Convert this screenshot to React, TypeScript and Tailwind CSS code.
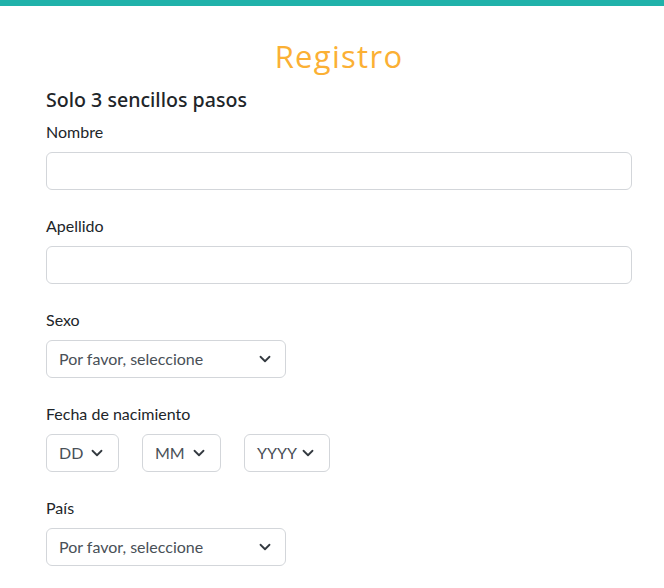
function Chevron() {
  return (
    <svg width="12" height="8" viewBox="0 0 12 8" className="shrink-0" aria-hidden>
      <path d="M1.5 1.75 6 6.25l4.5-4.5" fill="none" stroke="#343a40" strokeWidth="1.8" strokeLinecap="round" strokeLinejoin="round" />
    </svg>
  );
}

function Label({ children }: { children: React.ReactNode }) {
  return <div className="h-6 leading-6 mb-2 text-[16px] text-[#212529]">{children}</div>;
}

function TextField({ label }: { label: string }) {
  return (
    <div className="mb-6">
      <Label>{label}</Label>
      <div className="h-[38px] w-full rounded-md border border-[#d3d6da] bg-white" />
    </div>
  );
}

function Select({ text, width, pad = "pr-[15px]" }: { text: string; width: string; pad?: string }) {
  return (
    <div className={`${width} ${pad} h-[38px] rounded-md border border-[#d3d6da] bg-white pl-3 flex items-center justify-between text-[16px] text-[#495057]`}>
      <span>{text}</span>
      <Chevron />
    </div>
  );
}

export default function App() {
  return (
    <div className="min-h-[588px] bg-white" style={{ fontFamily: "Lato, 'Noto Sans', sans-serif" }}>
      <div className="h-[6px] bg-[#20b2aa]" />
      <div className="pl-[46px] pr-[32px]">
        <h1
          className="mt-[32px] h-9 leading-9 text-center text-[31px] tracking-[1.3px] text-[#fbb034]"
          style={{ fontFamily: "'Open Sans', sans-serif" }}
        >
          Registro
        </h1>
        <h2
          className="mt-[12px] mb-[6px] h-7 leading-7 text-[19.6px] font-medium text-[#212529]"
          style={{ fontFamily: "'Noto Sans', 'Open Sans', sans-serif" }}
        >
          Solo 3 sencillos pasos
        </h2>
        <TextField label="Nombre" />
        <TextField label="Apellido" />
        <div className="mb-6">
          <Label>Sexo</Label>
          <Select text="Por favor, seleccione" width="w-[240px]" pad="pr-[14px]" />
        </div>
        <div className="mb-6">
          <Label>Fecha de nacimiento</Label>
          <div className="flex gap-[23px]">
            <Select text="DD" width="w-[73px]" />
            <Select text="MM" width="w-[79px]" />
            <Select text="YYYY" width="w-[86px]" />
          </div>
        </div>
        <div className="mb-6">
          <Label>País</Label>
          <Select text="Por favor, seleccione" width="w-[240px]" pad="pr-[14px]" />
        </div>
      </div>
    </div>
  );
}
